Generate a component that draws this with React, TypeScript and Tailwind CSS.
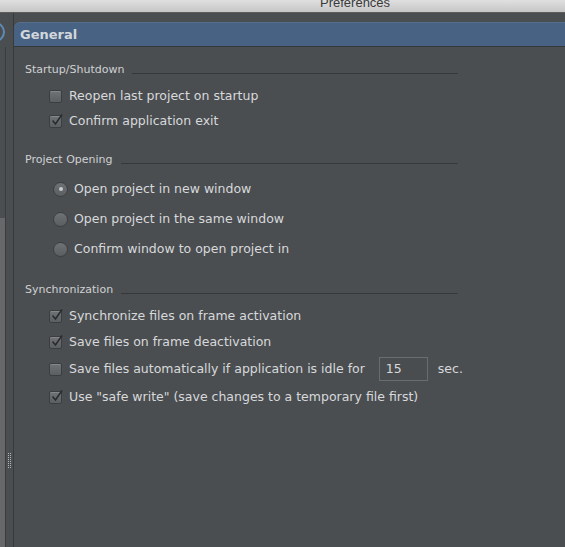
import React from 'react';

const font = { fontFamily: '"DejaVu Sans", Verdana, sans-serif' };

function Checkbox({ checked }: { checked?: boolean }) {
  return (
    <div className="relative w-[13px] h-[13px] shrink-0 rounded-[2px] border border-[#3b3d3f] bg-gradient-to-b from-[#707375] to-[#5c5f61] shadow-[inset_0_1px_0_rgba(255,255,255,0.15)]">
      {checked && (
        <svg viewBox="0 0 14 14" className="absolute left-[0px] top-[-3px] w-[14px] h-[14px]">
          <path d="M2.5 7.5 L5.5 11 L12 1.5" fill="none" stroke="#2a2b2c" strokeWidth="1.6" />
        </svg>
      )}
    </div>
  );
}

function Radio({ selected }: { selected?: boolean }) {
  return (
    <div className="w-[15px] h-[15px] shrink-0 rounded-full border border-[#3b3d3f] bg-gradient-to-b from-[#6f7274] to-[#5b5e60] flex items-center justify-center">
      {selected && <div className="w-[4px] h-[4px] rounded-full bg-[#c9cbcd]" />}
    </div>
  );
}

function SectionTitle({ title }: { title: string }) {
  return (
    <div className="flex items-end gap-[8px] w-[433px] h-[14px]">
      <span className="text-[11px] leading-[14px] text-[#cfd1d3] whitespace-nowrap">{title}</span>
      <div className="flex-1 h-px bg-[#36383a] mb-[3px]" />
    </div>
  );
}

function CheckRow({ label, checked, h }: { label: React.ReactNode; checked?: boolean; h: string }) {
  return (
    <div className={`flex items-center gap-[7px] pl-[24px] ${h}`}>
      <Checkbox checked={checked} />
      <div className="flex items-center text-[12.5px] text-[#d7d9db] whitespace-nowrap">{label}</div>
    </div>
  );
}

export default function App() {
  return (
    <div className="w-[565px] h-[547px] bg-[#4b4e51] flex flex-col overflow-hidden" style={font}>
      {/* window title bar */}
      <div className="h-[13px] shrink-0 bg-gradient-to-b from-[#e0e0e0] to-[#c6c6c6] border-b border-[#5c5c5c] overflow-hidden">
        <div className="pl-[320px] mt-[-4px] text-[13px] leading-[13px] text-[#3a3a3a]" style={{ fontFamily: '"Liberation Sans", Arial, sans-serif' }}>
          Preferences
        </div>
      </div>

      <div className="flex-1 flex min-h-0">
        {/* left tree edge */}
        <div className="w-[13px] shrink-0 flex overflow-hidden">
          <div className="w-[5px] flex flex-col">
            <div className="h-[205px] relative">
              <div className="w-[20px] h-[20px] rounded-full border-2 border-[#5c8bb5] ml-[-15px] mt-[9px]" />
            </div>
            <div className="flex-1 bg-[#67686a]" />
          </div>
          <div className="w-[8px] flex flex-col">
            <div className="h-[34px]" />
            <div className="flex-1 border-l border-[#3a3c3e] flex flex-col items-center">
              <div className="mt-[406px] grid grid-cols-2 gap-x-[1px] gap-y-[1px]">
                {Array.from({ length: 16 }).map((_, i) => (
                  <div key={i} className="w-[1px] h-[1px] bg-[#b5b7b9]" />
                ))}
              </div>
            </div>
          </div>
        </div>

        {/* main panel */}
        <div className="flex-1 flex flex-col pt-[9px] border-l border-[#383a3c]">
          <div className="h-[25px] bg-[#476283] rounded-tl-[6px] border-b border-[#35383b] flex items-center pl-[6px] pt-[1px] shadow-[inset_0_1px_0_rgba(255,255,255,0.08)]">
            <span className="text-[13px] font-bold text-[#d3d7dc]">General</span>
          </div>

          <div className="flex flex-col pl-[11px] pt-[16px]">
            <SectionTitle title="Startup/Shutdown" />
            <div className="mt-[7px] flex flex-col">
              <CheckRow h="h-[25px]" label="Reopen last project on startup" />
              <CheckRow h="h-[25px]" checked label="Confirm application exit" />
            </div>

            <div className="mt-[19px]">
              <SectionTitle title="Project Opening" />
            </div>
            <div className="mt-[7px] flex flex-col pl-[28px]">
              {[
                { l: 'Open project in new window', s: true },
                { l: 'Open project in the same window', s: false },
                { l: 'Confirm window to open project in', s: false },
              ].map((r) => (
                <div key={r.l} className="h-[30px] flex items-center gap-[6px]">
                  <Radio selected={r.s} />
                  <span className="text-[12.5px] text-[#d7d9db] whitespace-nowrap">{r.l}</span>
                </div>
              ))}
            </div>

            <div className="mt-[19px]">
              <SectionTitle title="Synchronization" />
            </div>
            <div className="mt-[6px] flex flex-col">
              <CheckRow h="h-[26px]" checked label="Synchronize files on frame activation" />
              <CheckRow h="h-[26px]" checked label="Save files on frame deactivation" />
              <CheckRow
                h="h-[28px]"
                label={
                  <>
                    <span>Save files automatically if application is idle for</span>
                    <div className="ml-[14px] w-[49px] h-[24px] border border-[#6a6d70] bg-[#4a4d50] flex items-center pl-[6px]">
                      15
                    </div>
                    <span className="ml-[10px]">sec.</span>
                  </>
                }
              />
              <CheckRow h="h-[28px]" checked label='Use "safe write" (save changes to a temporary file first)' />
            </div>
          </div>
        </div>
      </div>
    </div>
  );
}
